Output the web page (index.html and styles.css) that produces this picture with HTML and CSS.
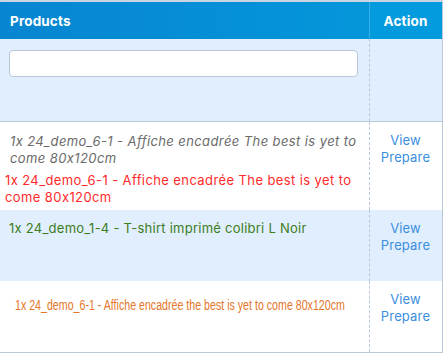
FILE: index.html
```html
<!DOCTYPE html>
<html lang="fr">
<head>
  <meta charset="UTF-8" />
  <title>Orders</title>
  <link rel="stylesheet" href="styles.css">
</head>
<body>

<table class="orders">
  <colgroup>
    <col class="w-products">
    <col class="w-action">
  </colgroup>
  <thead>
    <tr>
      <th class="col-products">Products</th>
      <th class="col-action">Action</th>
    </tr>
  </thead>
  <tbody>
    <tr class="filter-row">
      <td class="col-products"><input type="text" class="filter"></td>
      <td class="col-action"></td>
    </tr>
    <tr class="row-first">
      <td class="col-products">
        <div class="line-muted">1x 24_demo_6-1 - Affiche encadrée The best is yet to come 80x120cm</div>
        <div class="line-red">1x 24_demo_6-1 - Affiche encadrée The best is yet to come 80x120cm</div>
      </td>
      <td class="col-action"><a href="#">View</a><br><a href="#">Prepare</a></td>
    </tr>
    <tr class="alt">
      <td class="col-products"><div class="line-green">1x 24_demo_1-4 - T-shirt imprimé colibri L Noir</div></td>
      <td class="col-action"><a href="#">View</a><br><a href="#">Prepare</a></td>
    </tr>
    <tr>
      <td class="col-products"><div class="line-orange">1x 24_demo_6-1 - Affiche encadrée the best is yet to come 80x120cm</div></td>
      <td class="col-action"><a href="#">View</a><br><a href="#">Prepare</a></td>
    </tr>
  </tbody>
</table>

</body>
</html>
```

FILE: styles.css
```css
body { margin: 0; font-family: Inter, "DejaVu Sans", sans-serif; font-size: 13px; font-feature-settings: "calt" 0; letter-spacing: 0.15px; color: #555; background: #fff; }
.orders { width: 442px; table-layout: fixed; border-collapse: collapse; border-top: 2px solid #c9d5e2; border-right: 1px solid #b9c9da; border-bottom: 1px solid #b9c9da; }
.w-products { width: 369px; }
.w-action { width: 73px; }
.orders th { height: 37px; padding: 0 10px; text-align: left; font-size: 13.5px; font-weight: 700; color: #fff; background: linear-gradient(to right, #0785d1, #0596da); }
.orders th.col-action { background: #049ade; border-left: 1px solid #38aee6; text-align: center; padding: 0; }
.orders td { vertical-align: top; padding: 10px 9px; line-height: 17px; }
.orders td.col-action { border-left: 1px dashed #b9c9da; text-align: center; padding: 10px 0 27px; }
.orders a { color: #3b8ee0; text-decoration: none; }
.filter-row { height: 82px; }
.filter-row td { background: #e1eefe; }
.orders .filter-row td.col-action { padding: 0; }
.filter { display: block; width: 349px; height: 27px; box-sizing: border-box; border: 1px solid #b8c8dc; border-radius: 4px; background: #fff; margin: 1px 0 34px; }
.row-first td { border-top: 1px solid #b9c9da; padding-top: 11px; }
.orders .row-first td.col-products { padding-bottom: 0; }
.alt td { background: #e1eefe; }
.line-muted { font-style: italic; color: #6b6b6b; padding-left: 1px; letter-spacing: 0.4px; }
.line-red { color: #ff2a2a; margin: 5px 0 4px -4px; letter-spacing: 0.4px; }
.line-green { color: #3c7d1c; letter-spacing: 0.25px; }
.line-orange { display: inline-block; white-space: nowrap; color: #e5762b; font-family: "Liberation Sans", Arial, sans-serif; font-size: 14px; letter-spacing: 0; transform: scaleX(0.76); transform-origin: left top; margin: 6px 0 0 6px; }
```
